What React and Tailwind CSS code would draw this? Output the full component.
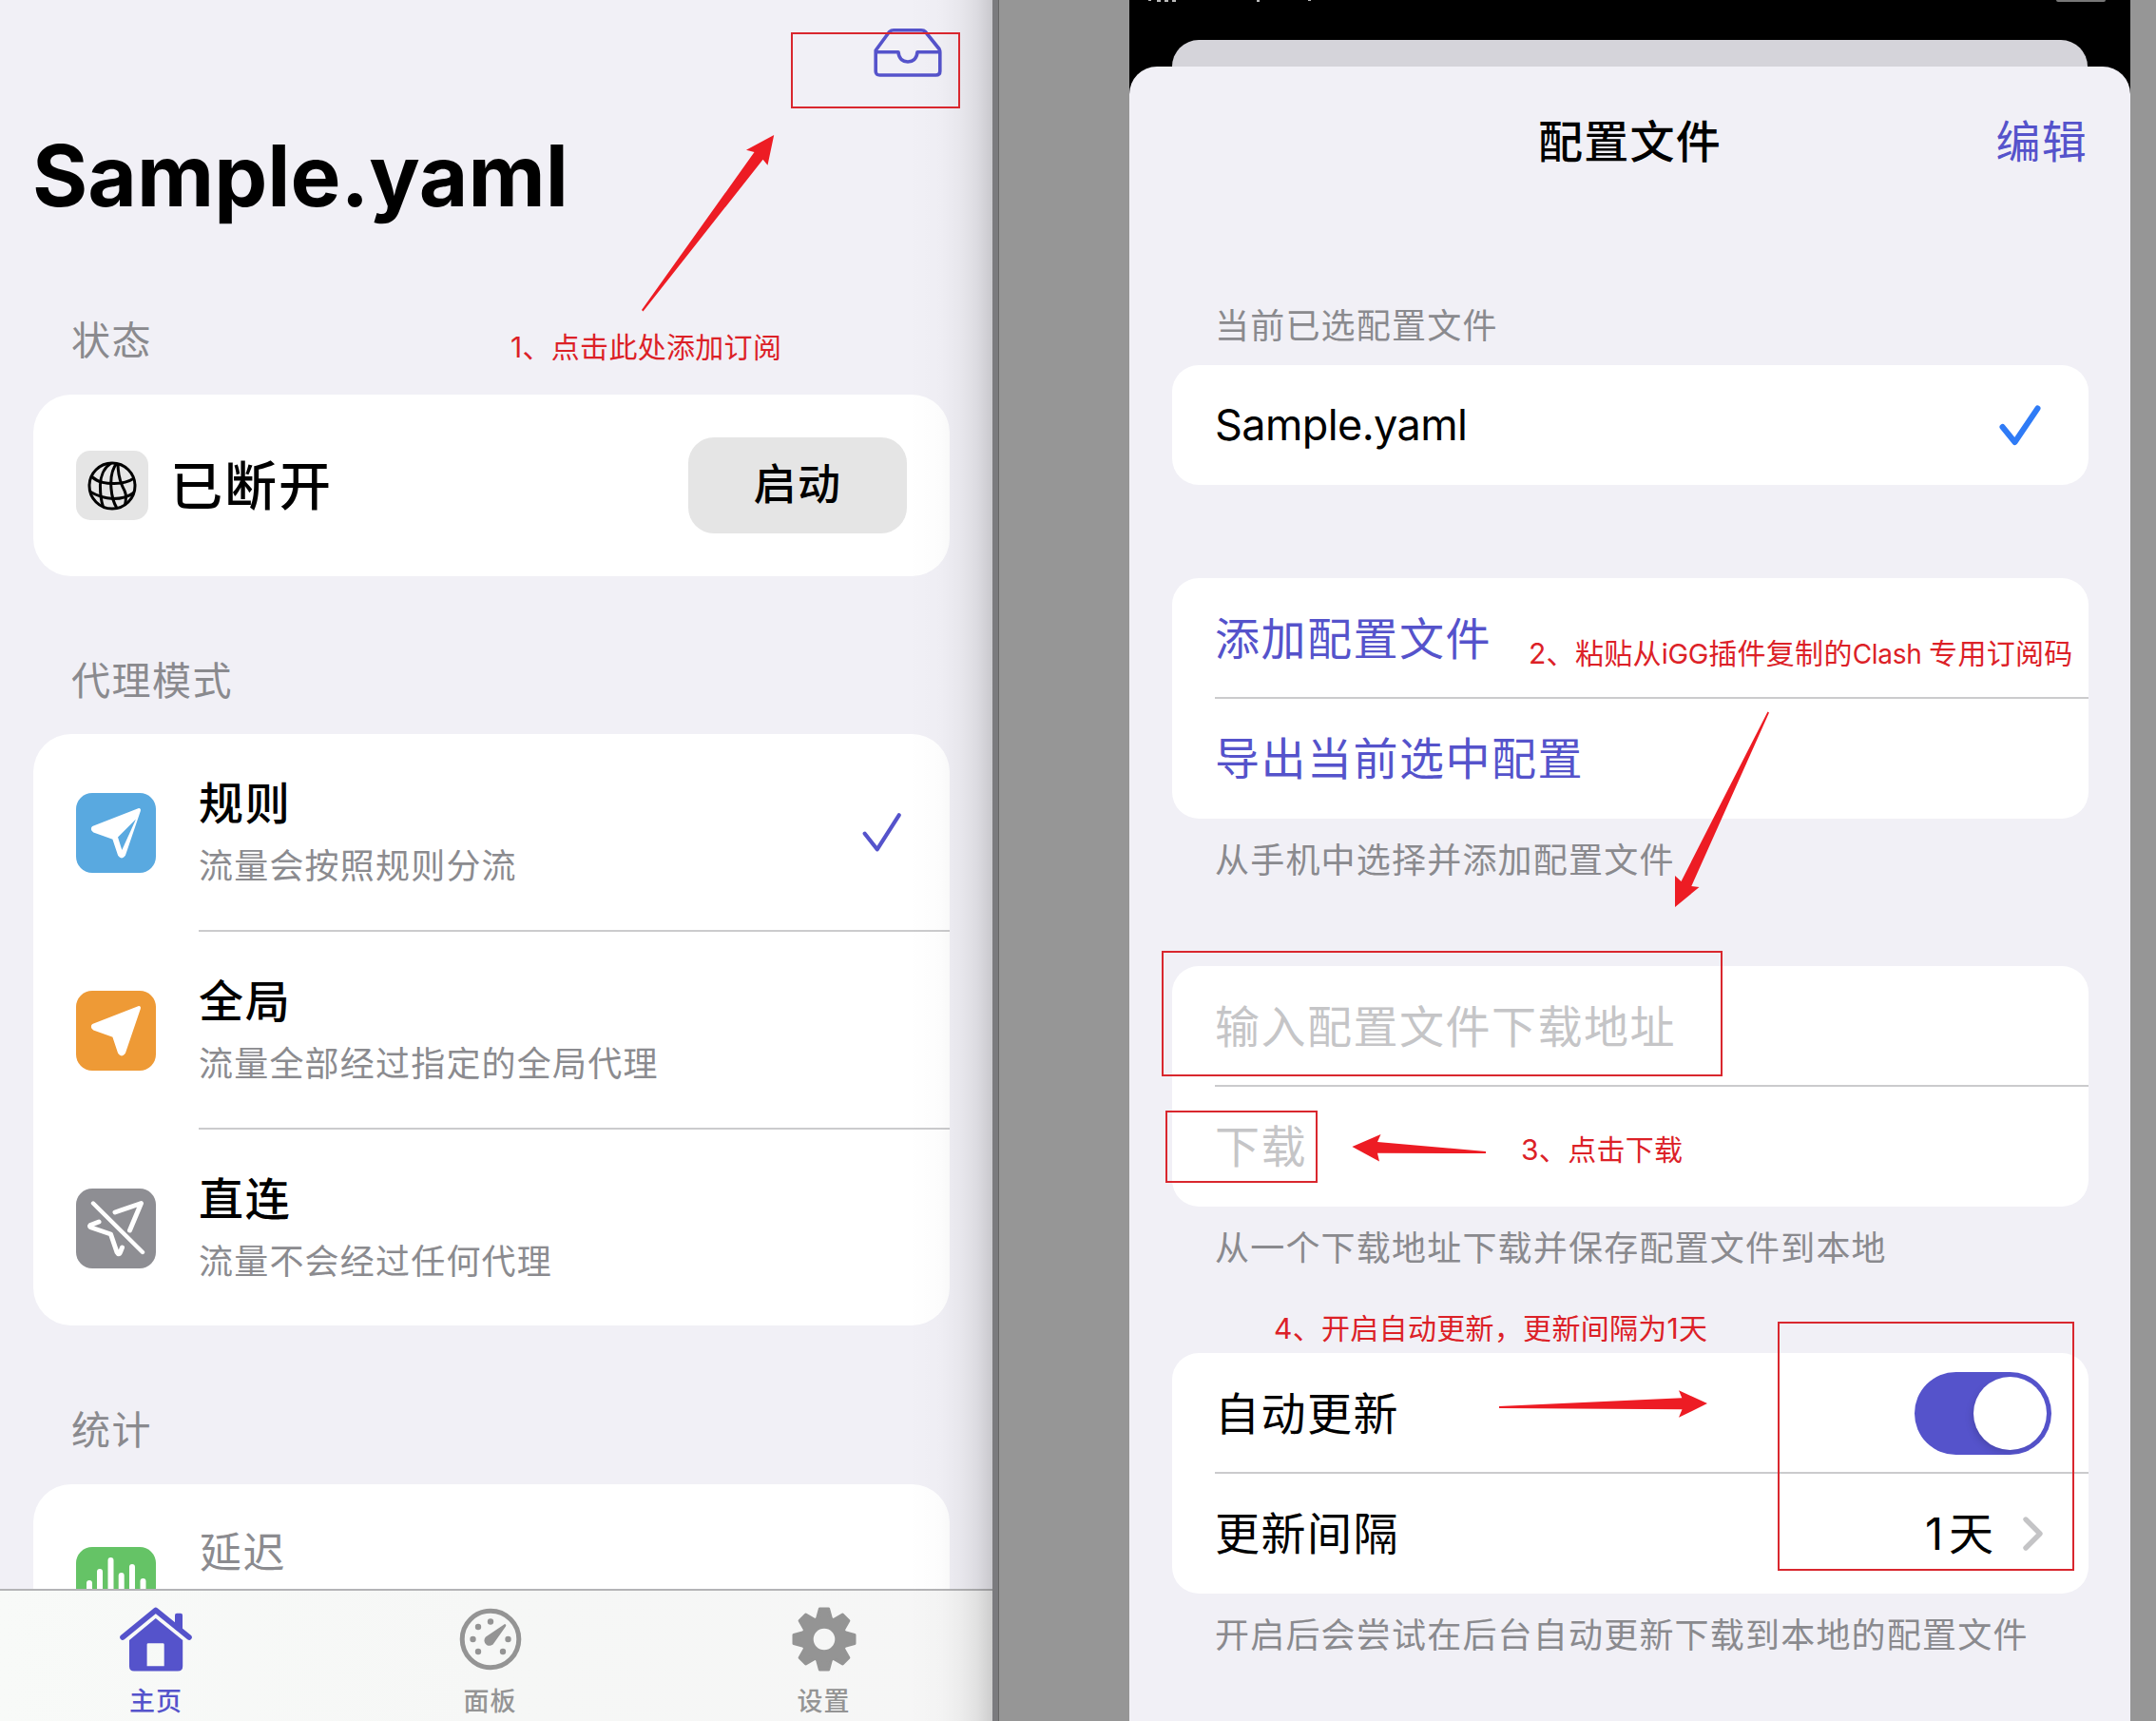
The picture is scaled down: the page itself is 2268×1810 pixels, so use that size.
import React from "react";

const SANS = "font-['Inter','Noto_Sans_CJK_SC',sans-serif]";

function Plane({ kind }) {
  if (kind === "rule") {
    return (
      <svg viewBox="0 0 84 84" className="h-full w-full">
        <path d="M66 18 L18.5 36.5 Q17 38 19 39.5 L40 47 L46 65 Q48 68 50 65 Z" fill="#fff" stroke="#fff" strokeWidth="4" strokeLinejoin="round" />
        <path d="M63 27.500 L48.300 60 L44 46.500 Z" fill="#59a9e0" />
      </svg>
    );
  }
  if (kind === "global") {
    return (
      <svg viewBox="0 0 84 84" className="h-full w-full">
        <path d="M66 18 L18.5 36.5 Q17 38 19 39.5 L40 47 L46 65 Q48 68 50 65 Z" fill="#fff" stroke="#fff" strokeWidth="4" strokeLinejoin="round" />
      </svg>
    );
  }
  return (
    <svg viewBox="0 0 84 84" className="h-full w-full" fill="none" stroke="#fff" strokeWidth="5" strokeLinecap="round" strokeLinejoin="round">
      <path d="M41 25 L68.5 15.500 L56.500 44" />
      <path d="M24 35 L15 38.500 Q13.500 40 16 41 L36.500 48 L43 67 Q45 70.500 46.500 67 L48.500 62" />
      <path d="M18 15.500 L70 67" strokeWidth="4.400" />
    </svg>
  );
}

function Globe() {
  return (
    <svg viewBox="-27 -27 54 54" className="h-[54px] w-[54px]" fill="none" stroke="#000" strokeWidth="3">
      <circle r="24" strokeWidth="3" />
      <path d="M-1 -24 C-9 -19 -13 -9 -12.500 2 C-12.500 10 -11.500 16 -9.500 22" />
      <path d="M5 -24 C0 -18 -2 -8 -1 3 C-0.500 10 1 17 5 23.500" />
      <path d="M6 -24 C6 -14 8 -4 13 5 C15 9 15 13 13.500 20" />
      <path d="M-22 -10 C-14 -3 -6 -2.500 2 -2.500 C10 -2.500 17 -4 23 -8" />
      <path d="M-23.500 6 C-15 11 -8 13 1 13.500 C10 13.500 18 11 23 7" />
    </svg>
  );
}

function Inbox() {
  return (
    <svg viewBox="0 0 72 54" className="h-[54px] w-[72px]" fill="none" stroke="#5553cb" strokeWidth="3.6" strokeLinejoin="round">
      <path d="M2.200 25 L16.500 5.500 Q18.500 3.700 21 3.700 H50 Q53 3.700 54.500 5.500 L69 23.500 Q69.800 25 69.800 27 V47 Q69.800 51 65.500 51 H6.500 Q2.200 51 2.200 47 Z" />
      <path d="M2.200 26.700 H26 C26.500 34 31 37 36 37 C41 37 45.500 34 46 26.700 H69.800" />
    </svg>
  );
}

function HomeIcon() {
  return (
    <svg viewBox="0 0 76 68" className="h-[68px] w-[76px]">
      <path d="M3 32 L37.800 3.500 L73 32" fill="none" stroke="#5553cb" strokeWidth="5.600" strokeLinecap="round" strokeLinejoin="round" />
      <path d="M58 23 V8.500 Q58 6.700 60 6.700 H64 Q66 6.700 66 8.500 V28 Z" fill="#5553cb" />
      <path fillRule="evenodd" d="M37.800 12 L66.200 35 V62.500 Q66.200 67.500 61 67.500 H15 Q10 67.500 10 62.500 V35 Z M30 38.200 Q28.600 38.200 28.600 39.600 V62.300 H46.700 V39.600 Q46.700 38.200 45.300 38.200 Z" fill="#5553cb" />
    </svg>
  );
}

function GaugeIcon() {
  const dots = [[0, -18.5], [-13, -13], [-18.500, 0], [-13, 13], [13, 13], [18.500, 0]];
  return (
    <svg viewBox="-33 -33 66 66" className="h-[66px] w-[66px]">
      <circle r="29.800" fill="none" stroke="#949494" strokeWidth="5" />
      {dots.map(([x, y]) => (
        <circle key={`${x},${y}`} cx={x} cy={y} r="3.200" fill="#949494" />
      ))}
      <path d="M15 -16 Q17 -15.500 16 -13.500 L4 3.500 A5.500 5.500 0 1 1 -5 -2.500 Z" fill="#949494" />
    </svg>
  );
}

function GearIcon() {
  return (
    <svg viewBox="-35 -35 70 70" className="h-[70px] w-[70px]">
      {[0, 45, 90, 135, 180, 225, 270, 315].map((a) => (
        <path key={a} transform={`rotate(${a})`} d="M-7.600 -21 L-4.600 -32 H4.600 L7.600 -21 Z" fill="#949494" stroke="#949494" strokeWidth="3" strokeLinejoin="round" />
      ))}
      <circle r="17.700" fill="none" stroke="#949494" strokeWidth="12.800" />
    </svg>
  );
}

function ModeRow({ kind, color, title, sub, checked, last, height }) {
  return (
    <div className={`flex pl-[45px] ${height}`}>
      <div className={`mt-[62px] h-[84px] w-[84px] overflow-hidden rounded-[17px] ${color}`}>
        <Plane kind={kind} />
      </div>
      <div className={`ml-[45px] flex flex-1 justify-between ${last ? "" : "border-b-2 border-[#cbcbcd]"}`}>
        <div className="pt-[46px]">
          <div className="h-[54px] text-[47px] leading-[54px] font-medium tracking-[1.800px]">{title}</div>
          <div className="mt-[16px] h-[46px] text-[36px] leading-[46px] tracking-[1.200px] text-[#8b8b8f]">{sub}</div>
        </div>
        {checked && (
          <svg viewBox="0 0 42 44" className="mt-[82px] mr-[51px] h-[44px] w-[42px]" fill="none" stroke="#5553cb" strokeWidth="4.200" strokeLinecap="round" strokeLinejoin="round">
            <path d="M3.700 22.700 L16.700 39.300 L39.700 3.300" />
          </svg>
        )}
      </div>
    </div>
  );
}

function Tab({ icon, label, color, box }) {
  return (
    <div className={`flex flex-col items-center ${box}`}>
      <div className="flex h-[98px] items-center pt-[3px]">{icon}</div>
      <div className={`mt-[3px] text-[27px] leading-[32px] font-medium tracking-[1px] ${color}`}>{label}</div>
    </div>
  );
}

function SectionLabel({ children, space }) {
  return <div className={`pl-[75px] text-[41px] leading-[50px] tracking-[1.500px] text-[#8a8a8e] ${space}`}>{children}</div>;
}

function HomePhone() {
  return (
    <div className="relative flex h-full w-[1044px] flex-col overflow-hidden bg-[#f1f0f6]">
      <div className="flex h-[82px] justify-end pt-[28px] pr-[53px]">
        <Inbox />
      </div>
      <h1 className="mt-[49px] h-[108px] pl-[34px] text-[89px] leading-[108px] font-bold tracking-[0px]">Sample.yaml</h1>
      <SectionLabel space="mt-[94px]">状态</SectionLabel>
      <div className="mt-[32px] ml-[35px] flex h-[191px] w-[964px] items-center rounded-[40px] bg-white pr-[45px] pl-[45px]">
        <div className="flex h-[73px] w-[76px] items-center justify-center rounded-[15px] bg-[#e5e5e5]">
          <Globe />
        </div>
        <div className="ml-[23px] flex-1 text-[55px] leading-[64px] font-medium tracking-[2px]">已断开</div>
        <div className="flex h-[101px] w-[230px] items-center justify-center rounded-[27px] bg-[#e5e5e5] pb-[2px] text-[45px] leading-[54px] font-medium tracking-[1.500px]">启动</div>
      </div>
      <SectionLabel space="mt-[85px]">代理模式</SectionLabel>
      <div className="mt-[31px] ml-[35px] h-[622px] w-[964px] rounded-[40px] bg-white">
        <ModeRow height="h-[208px]" kind="rule" color="bg-[#59a9e0]" title="规则" sub="流量会按照规则分流" checked />
        <ModeRow height="h-[208px]" kind="global" color="bg-[#ee9a36]" title="全局" sub="流量全部经过指定的全局代理" />
        <ModeRow height="h-[206px]" kind="direct" color="bg-[#8e8e93]" title="直连" sub="流量不会经过任何代理" last />
      </div>
      <SectionLabel space="mt-[85px]">统计</SectionLabel>
      <div className="mt-[32px] ml-[35px] flex h-[110px] w-[964px] overflow-hidden rounded-t-[40px] bg-white pl-[45px]">
        <div className="mt-[66px] h-[84px] w-[84px] shrink-0 rounded-[17px] bg-[#65c366]">
          <svg viewBox="0 0 84 84" className="h-full w-full" stroke="#fff" strokeWidth="6" strokeLinecap="round">
            <path d="M14 38 V60 M25 26 V60 M36.500 14 V60 M47.700 30 V60 M59 21 V60 M70.500 36 V60" />
          </svg>
        </div>
        <div className="mt-[45px] ml-[46px] text-[44px] leading-[54px] tracking-[1.500px] text-[#8b8b8f]">延迟</div>
      </div>
      <div className="flex h-[139px] shrink-0 border-t-2 border-[#b4b4b6] bg-linear-to-r from-[#f8faf8] via-[#f6f7f6] to-[#f6f6f6]">
        <Tab icon={<HomeIcon />} label="主页" color="text-[#5553cb]" box="w-[340px] pr-[12px]" />
        <Tab icon={<GaugeIcon />} label="面板" color="text-[#949494]" box="w-[351px]" />
        <Tab icon={<GearIcon />} label="设置" color="text-[#949494]" box="w-[351px]" />
      </div>
      <div className="absolute inset-y-0 right-0 w-[90px] bg-[linear-gradient(to_right,rgba(0,0,0,0)_0%,rgba(0,0,0,0.012)_40%,rgba(0,0,0,0.04)_62%,rgba(0,0,0,0.085)_82%,rgba(0,0,0,0.17)_100%)]" />
    </div>
  );
}

function Row({ children, color = "text-black", line }) {
  return (
    <div className={`ml-[45px] flex items-center text-[47px] leading-[56px] tracking-[1.500px] ${color} ${line ? "h-[127px] border-b-2 border-[#cbcbcd] pt-[2px]" : "h-[126px]"}`}>
      {children}
    </div>
  );
}

function Card({ children, space }) {
  return <div className={`ml-[45px] w-[964px] rounded-[28px] bg-white ${space}`}>{children}</div>;
}

function Note({ children, space }) {
  return <div className={`pl-[90px] text-[36px] leading-[46px] tracking-[1.200px] whitespace-nowrap text-[#8a8a8e] ${space}`}>{children}</div>;
}

function ConfigPhone() {
  return (
    <div className="flex h-full w-[1053px] flex-col overflow-hidden bg-black">
      <div className="flex h-[42px] items-start justify-between pr-[26px] pl-[20px]">
        <svg viewBox="0 0 190 3" className="h-[3px] w-[190px]" fill="#bbb">
          <path d="M0 0h3v1h-3z M9 0h4v2h-4z M17 0h4v2h-4z M25 0h4v2h-4z M114 0h3v2h-3z M168 0h3v1h-3z" />
        </svg>
        <div className="h-[2px] w-[52px] rounded-b-[2px] bg-[#777]" />
      </div>
      <div className="mx-[45px] h-[28px] rounded-t-[28px] bg-[#d5d4da]" />
      <div className="flex-1 rounded-t-[29px] bg-[#f1f0f6]">
        <div className="grid grid-cols-3 items-center px-[45px] pt-[51px] text-[47px] leading-[56px] tracking-[1.200px]">
          <span />
          <span className="text-center font-medium">配置文件</span>
          <span className="text-right text-[#5553cb]">编辑</span>
        </div>
        <Note space="mt-[143px]">当前已选配置文件</Note>
        <Card space="mt-[18px]">
          <Row>
            <span className="flex-1 text-[45px] tracking-[-0.600px]">Sample.yaml</span>
            <svg viewBox="0 0 46 46" className="mr-[50px] h-[46px] w-[46px]" fill="none" stroke="#2f7bf6" strokeWidth="6" strokeLinecap="round" strokeLinejoin="round">
              <path d="M5.500 25 L18.500 41 L42.500 5.500" />
            </svg>
          </Row>
        </Card>
        <Card space="mt-[98px]">
          <Row color="text-[#5553cb]" line>添加配置文件</Row>
          <Row color="text-[#5553cb]">导出当前选中配置</Row>
        </Card>
        <Note space="mt-[21px]">从手机中选择并添加配置文件</Note>
        <Card space="mt-[88px]">
          <Row color="text-[#c5c5c7]" line>输入配置文件下载地址</Row>
          <Row color="text-[#c5c5c7]">下载</Row>
        </Card>
        <Note space="mt-[21px]">从一个下载地址下载并保存配置文件到本地</Note>
        <Card space="mt-[87px]">
          <Row line>
            <span className="flex-1">自动更新</span>
            <span className="mr-[39px] flex h-[87px] w-[144px] items-center justify-end rounded-full bg-[#5553cb] pr-[5px]">
              <span className="h-[77px] w-[77px] rounded-full bg-white shadow-[-4px_4px_10px_-4px_rgba(0,0,0,0.2)]" />
            </span>
          </Row>
          <Row>
            <span className="flex-1">更新间隔</span>
            <span className="tracking-[6px]">1</span>
            <span className="tracking-[0px]">天</span>
            <svg viewBox="0 0 24 38" className="mr-[46px] ml-[30px] h-[38px] w-[24px]" fill="none" stroke="#c4c4c6" strokeWidth="5.400" strokeLinecap="round" strokeLinejoin="round">
              <path d="M4 4 L19 19 L4 34" />
            </svg>
          </Row>
        </Card>
        <Note space="mt-[21px]">开启后会尝试在后台自动更新下载到本地的配置文件</Note>
      </div>
    </div>
  );
}

/* Red tutorial marks that lie over both phones. */
function Annotations() {
  const text = "absolute text-[30px] leading-[36px] tracking-[0.300px] whitespace-nowrap text-[#dc2127]";
  return (
    <div className="pointer-events-none absolute inset-0">
      <svg viewBox="0 0 2268 1810" className="absolute inset-0 h-[1810px] w-[2268px]">
        <g fill="none" stroke="#d9272e" strokeWidth="2">
          <path d="M833 35H1009V113H833Z" />
          <path d="M1223 1001H1811V1131H1223Z" />
          <path d="M1227 1169H1385V1243H1227Z" />
          <path d="M1871 1391H2181V1651H1871Z" />
        </g>
        <g fill="#ed1c24">
          <path d="M814.200 142 L785 157.800 L793.500 160 L675 326 L676.500 327.500 L802.600 167.700 L807.500 173.800 Z" />
          <path d="M1762 954 V921 L1768.500 927 L1859.500 748.500 L1861 749.500 L1779.300 932 L1787.500 933 Z" />
          <path d="M1422.400 1206 L1452.500 1193 L1449 1201 L1563 1211 V1213 L1449 1212.700 L1451 1221.500 Z" />
          <path d="M1796 1476 L1766 1462.300 L1769.300 1470.300 L1577 1479 V1481 L1769.500 1482.300 L1766 1490.800 Z" />
        </g>
      </svg>
      <span className={`${text} top-[347px] left-[537px]`}>1、点击此处添加订阅</span>
      <span className={`${text} top-[669px] left-[1608px]`}>
        2、粘贴从<span className="text-[29px] tracking-[-0.300px]">iGG</span>插件复制的<span className="text-[28px] tracking-[-0.300px]">Clash </span>专用订阅码
      </span>
      <span className={`${text} top-[1191px] left-[1600px]`}>3、点击下载</span>
      <span className={`${text} top-[1379px] left-[1340px]`}>4、开启自动更新，更新间隔为1天</span>
    </div>
  );
}

export default function App() {
  return (
    <div lang="zh-CN" className={`relative flex h-[1810px] w-[2268px] overflow-hidden bg-[#969696] text-black ${SANS}`}>
      <HomePhone />
      <div className="w-[7px] border-r border-[#666] bg-[#7b7b7e]" />
      <div className="w-[137px]" />
      <ConfigPhone />
      <Annotations />
    </div>
  );
}
